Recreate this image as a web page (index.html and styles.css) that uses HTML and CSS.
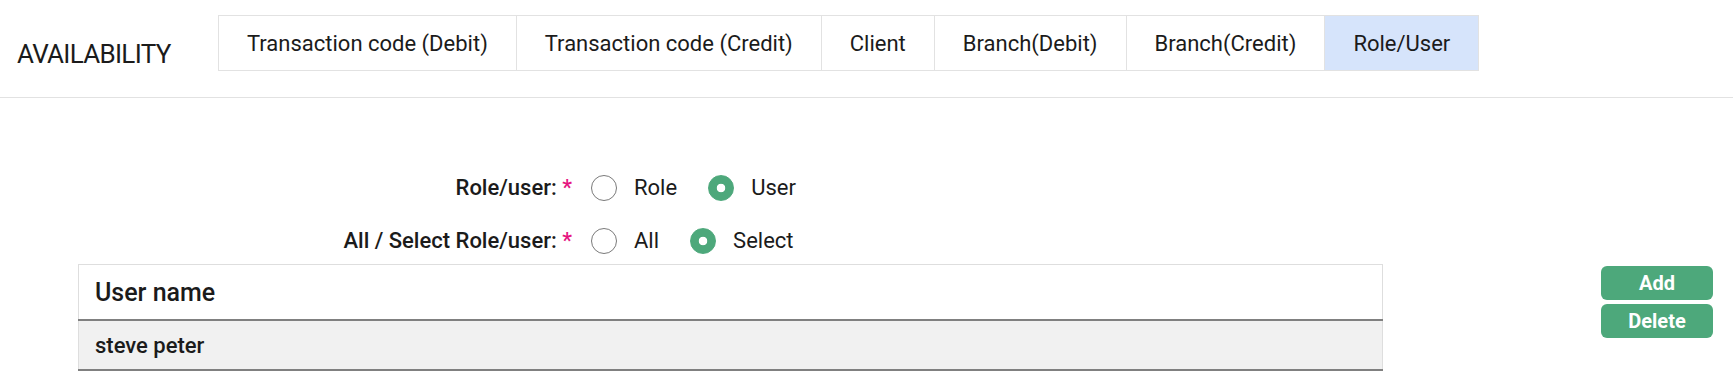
FILE: index.html
```html
<!DOCTYPE html>
<html lang="en">
<head>
    <meta charset="UTF-8">
    <title>Availability</title>
    <link rel="stylesheet" href="styles.css">
</head>
<body>
    <div class="header">
        <div class="page-title">AVAILABILITY</div>
        <div class="tabs">
            <div class="tab">Transaction code (Debit)</div>
            <div class="tab">Transaction code (Credit)</div>
            <div class="tab">Client</div>
            <div class="tab">Branch(Debit)</div>
            <div class="tab">Branch(Credit)</div>
            <div class="tab active">Role/User</div>
        </div>
    </div>

    <div class="form">
        <div class="form-row">
            <div class="label">Role/user: <span class="req">*</span></div>
            <div class="options">
                <label class="option"><span class="radio"></span>Role</label>
                <label class="option"><span class="radio checked"></span>User</label>
            </div>
        </div>
        <div class="form-row">
            <div class="label">All / Select Role/user: <span class="req">*</span></div>
            <div class="options">
                <label class="option"><span class="radio"></span>All</label>
                <label class="option"><span class="radio checked"></span>Select</label>
            </div>
        </div>
    </div>

    <div class="list-area">
        <table class="user-table">
            <thead>
                <tr><th>User name</th></tr>
            </thead>
            <tbody>
                <tr><td>steve peter</td></tr>
            </tbody>
        </table>
        <div class="actions">
            <button class="btn">Add</button>
            <button class="btn">Delete</button>
        </div>
    </div>
</body>
</html>
```

FILE: styles.css
```css
body {
    margin: 0;
    font-family: Roboto, "Noto Sans", sans-serif;
    color: #1b1b1b;
    background-color: white;
}
.header {
    display: flex;
    padding-top: 15px;
    padding-bottom: 26px;
    border-bottom: 1px solid #e2e2e2;
}
.page-title {
    width: 218px;
    padding-left: 17px;
    padding-top: 24px;
    box-sizing: border-box;
    font-size: 26px;
    letter-spacing: -0.7px;
}
.tabs {
    display: flex;
    border: 1px solid #e2e2e2;
    height: 54px;
}
.tab {
    display: flex;
    align-items: center;
    padding: 0 28px;
    font-size: 22px;
    border-right: 1px solid #e2e2e2;
}
.tab:last-child {
    border-right: none;
}
.tab.active {
    background-color: #d6e4fb;
}
.form {
    padding-top: 63px;
}
.form-row {
    display: flex;
    align-items: center;
    height: 53px;
}
.label {
    width: 591px;
    text-align: right;
    font-weight: 500;
    font-size: 22px;
    padding-right: 19px;
    box-sizing: border-box;
}
.req {
    color: #e5157f;
}
.options {
    display: flex;
    gap: 31px;
}
.option {
    display: flex;
    align-items: center;
    gap: 17px;
    font-size: 22px;
}
.radio {
    width: 24px;
    height: 24px;
    border: 1px solid #7a7a7a;
    border-radius: 50%;
}
.radio.checked {
    border-color: #4da87b;
    background: radial-gradient(circle, white 0 4px, #4da87b 4.6px);
}
.list-area {
    display: flex;
    justify-content: space-between;
    align-items: flex-start;
    padding: 0 20px 0 78px;
    margin-top: -3px;
}
.user-table {
    width: 1305px;
    border-collapse: collapse;
    border: 1px solid #dedede;
}
.user-table th {
    text-align: left;
    font-weight: 500;
    font-size: 25px;
    height: 54px;
    padding: 0 16px;
    border-bottom: 2px solid #808080;
}
.user-table td {
    background-color: #f1f1f1;
    font-weight: 500;
    font-size: 22px;
    height: 48px;
    padding: 0 16px;
    border-bottom: 2px solid #808080;
}
.actions {
    display: flex;
    flex-direction: column;
    gap: 4px;
    margin-top: 2px;
}
.btn {
    width: 112px;
    height: 34px;
    background-color: #4da87b;
    color: white;
    border: none;
    border-radius: 6px;
    font-family: Roboto, sans-serif;
    font-weight: bold;
    font-size: 20px;
    cursor: pointer;
}
```
